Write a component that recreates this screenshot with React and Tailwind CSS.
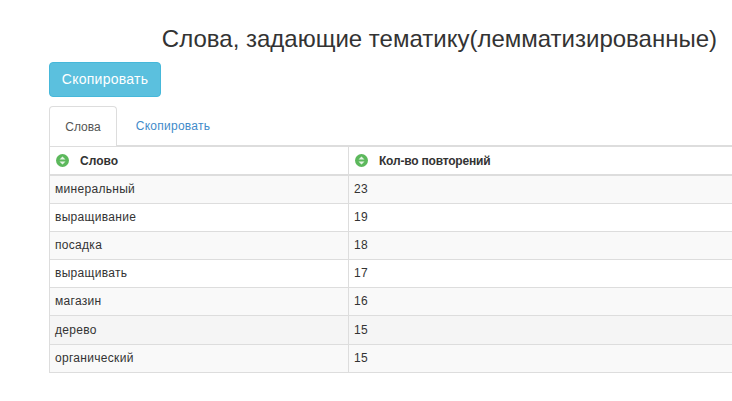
const rows = [
  { word: "минеральный", count: 23, bg: "bg-[#f9f9f9]", height: "h-[28px]" },
  { word: "выращивание", count: 19, bg: "bg-white", height: "h-[28px]" },
  { word: "посадка", count: 18, bg: "bg-[#f9f9f9]", height: "h-[28px]" },
  { word: "выращивать", count: 17, bg: "bg-white", height: "h-[28px]" },
  { word: "магазин", count: 16, bg: "bg-[#f9f9f9]", height: "h-[28px]" },
  { word: "дерево", count: 15, bg: "bg-[#f5f5f5]", height: "h-[29px]" },
  { word: "органический", count: 15, bg: "bg-[#f9f9f9]", height: "h-[28px]" },
];

const SortIcon = () => (
  <svg width="13" height="13" viewBox="0 0 13 13" className="shrink-0">
    <circle cx="6.5" cy="6.5" r="6.5" fill="#5cb85c" />
    <path d="M6.5 2.5 L9.5 5.6 H3.5 Z M6.5 10.5 L3.5 7.4 H9.5 Z" fill="#e4f3e4" />
  </svg>
);

const App = () => {
  return (
    <div className="w-[732px] h-[401px] overflow-hidden bg-white text-[#333] font-['Liberation_Sans',Arial,sans-serif]">
      <div className="pl-[49px] w-[1000px]">
        <div className="w-[683px] pt-[24px] text-right">
          <h2 className="text-[24px] leading-[29px] font-normal pr-[15px]">
            Слова, задающие тематику(лемматизированные)
          </h2>
        </div>

        <button className="mt-[9px] h-[35px] w-[112px] rounded-[4px] border border-[#46b8da] bg-[#5bc0de] text-[14px] tracking-[0.25px] text-white">
          Скопировать
        </button>

        <div className="mt-[9px] flex text-[12px] h-[40px]">
          <div className="w-[68px] h-[40px] rounded-t-[4px] border border-[#ddd] border-b-0 bg-white flex items-center justify-center text-[#555]">
            Слова
          </div>
          <div className="w-[110px] h-[40px] ml-[1px] flex items-center justify-center tracking-[0.25px] text-[#428bca]">
            Скопировать
          </div>
        </div>

        <table className="w-[900px] table-fixed border-collapse text-[12px] -mt-[1px]">
          <thead>
            <tr className="h-[29px] bg-white">
              <th className="w-[299px] border border-[#ddd] border-b-2 border-t-2 px-[6px] text-left font-bold">
                <div className="flex items-center gap-[11px]">
                  <SortIcon />
                  Слово
                </div>
              </th>
              <th className="border border-[#ddd] border-b-2 border-t-2 px-[6px] text-left font-bold">
                <div className="flex items-center gap-[11px] tracking-[-0.2px]">
                  <SortIcon />
                  Кол-во повторений
                </div>
              </th>
            </tr>
          </thead>
          <tbody>
            {rows.map((row) => (
              <tr key={row.word} className={`${row.height} ${row.bg}`}>
                <td className="border border-[#ddd] px-[5px] tracking-[0.3px]">{row.word}</td>
                <td className="border border-[#ddd] px-[5px] tracking-[0.3px]">{row.count}</td>
              </tr>
            ))}
          </tbody>
        </table>
      </div>
    </div>
  );
};

export default App;
